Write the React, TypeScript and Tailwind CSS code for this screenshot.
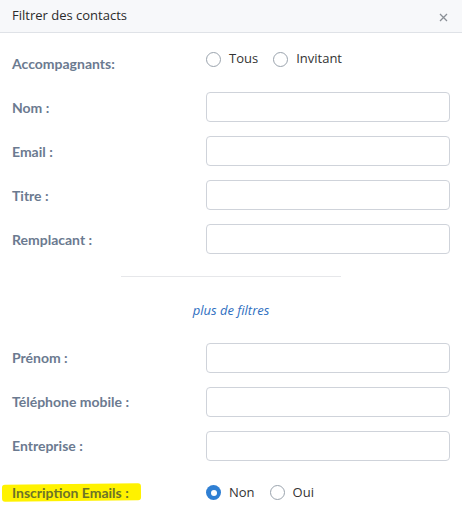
import React from "react";

const labelCls =
  "w-[194px] shrink-0 text-[14px] font-bold text-[#6b7a90] [font-family:Lato,'Noto_Sans',sans-serif]";

function Radio({ checked, label, className = "" }: { checked?: boolean; label: string; className?: string }) {
  return (
    <label className={`flex items-center gap-[8px] ${className}`}>
      {checked ? (
        <span className="flex h-[15px] w-[15px] items-center justify-center rounded-full bg-[#2f7fd3]">
          <span className="h-[6px] w-[6px] rounded-full bg-white" />
        </span>
      ) : (
        <span className="h-[15px] w-[15px] rounded-full border border-[#9aa3ad] bg-white" />
      )}
      <span className="text-[13px] text-[#333] [font-family:'Open_Sans',sans-serif]">{label}</span>
    </label>
  );
}

function InputRow({ label }: { label: string }) {
  return (
    <div className="flex h-[30px] items-center">
      <div className={labelCls}>{label}</div>
      <div className="h-[30px] w-[244px] rounded-[4px] border border-[#cfd3da] bg-white" />
    </div>
  );
}

export default function App() {
  return (
    <div className="h-[527px] w-[462px] overflow-hidden bg-white">
      <div className="flex h-[33px] items-center justify-between border-b border-[#dfe2e7] bg-[#f7f8fa] pl-[12px] pr-[14px]">
        <span className="text-[13px] text-[#2b2b2b] [font-family:'Open_Sans',sans-serif]">Filtrer des contacts</span>
        <svg width="9" height="9" viewBox="0 0 9 9" className="mt-[2px]">
          <path d="M1 1 L8 8 M8 1 L1 8" stroke="#8a8f96" strokeWidth="1.3" />
        </svg>
      </div>
      <div className="flex flex-col pl-[12px] pt-[15px]">
        <div className="flex h-[30px] items-center">
          <div className={labelCls}>Accompagnants:</div>
          <div className="flex -translate-y-[4px] items-center">
            <Radio label="Tous" className="mr-[15px]" />
            <Radio label="Invitant" />
          </div>
        </div>
        <div className="mt-[14px] flex flex-col gap-[14px]">
          <InputRow label="Nom :" />
          <InputRow label="Email :" />
          <InputRow label="Titre :" />
          <InputRow label="Remplacant :" />
        </div>
      </div>
      <div className="mt-[22px] flex justify-center">
        <div className="h-px w-[220px] bg-[#e6e7ea]" />
      </div>
      <div className="mt-[24px] text-center text-[13px] italic text-[#2f6fbf] [font-family:'Open_Sans',sans-serif]">
        plus de filtres
      </div>
      <div className="mt-[22px] flex flex-col gap-[14px] pl-[12px]">
        <InputRow label="Prénom :" />
        <InputRow label="Téléphone mobile :" />
        <InputRow label="Entreprise :" />
        <div className="relative mt-[8px] flex h-[20px] items-center">
          <span className="absolute left-[-10px] top-[1px] h-[17px] w-[139px] -rotate-[0.6deg] rounded-[3px] bg-[#fff200]" />
          <div className="relative w-[194px] shrink-0 text-[14px] font-bold text-[#6c7428] [font-family:Lato,'Noto_Sans',sans-serif]">
            Inscription Emails :
          </div>
          <div className="relative flex items-center">
            <Radio checked label="Non" className="mr-[15px]" />
            <Radio label="Oui" />
          </div>
        </div>
      </div>
    </div>
  );
}
